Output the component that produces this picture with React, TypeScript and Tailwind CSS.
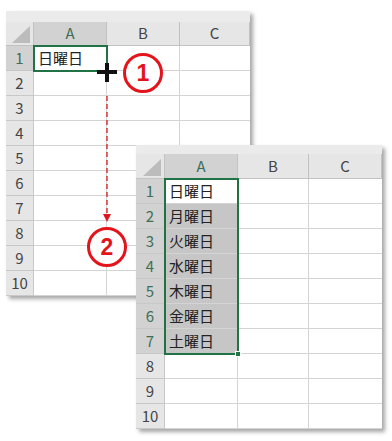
import React from "react";

const FONT = { fontFamily: '"Noto Sans CJK JP", "Noto Sans", sans-serif' };

type SheetProps = {
  className: string;
  cols: string;
  bandClass: string;
  headerClass: string;
  values: string[];
  selRows: number; // number of rows whose header is highlighted
  fillFrom: number; // first row index with gray fill
  children?: React.ReactNode;
};

function Sheet({ className, cols, bandClass, headerClass, values, selRows, fillFrom, children }: SheetProps) {
  const rows = Array.from({ length: 10 }, (_, i) => i);
  return (
    <div
      className={`absolute bg-white shadow-[3px_3px_4px_rgba(0,0,0,0.35)] ${className}`}
      style={FONT}
    >
      <div className={`${bandClass} bg-[#ebebeb]`} />
      <div className={`grid ${cols}`}>
        {/* header row */}
        <div className={`${headerClass} bg-[#e6e6e6] border-b border-r border-[#c2c2c2] flex items-end justify-end pr-[3px] pb-[2px]`}>
          <svg width="18" height="17" viewBox="0 0 18 17">
            <polygon points="18,0 18,17 0,17" fill="#bcbcbc" />
          </svg>
        </div>
        {["A", "B", "C"].map((c, ci) => (
          <div
            key={c}
            className={`${headerClass} flex items-center justify-center border-b border-r border-[#c2c2c2] text-[15px] ${
              ci === 0 ? "bg-[#d2d2d2] text-[#3e6e55]" : "bg-[#e6e6e6] text-[#444]"
            }`}
          >
            {c}
          </div>
        ))}
        {rows.map((r) => {
          const sel = r < selRows;
          const filled = r >= fillFrom && r < selRows;
          return (
            <React.Fragment key={r}>
              <div
                className={`h-[25px] flex items-center justify-center border-b border-r border-[#c8c8c8] text-[15px] ${
                  sel ? "bg-[#d2d2d2] text-[#3e6e55]" : "bg-[#e6e6e6] text-[#444]"
                }`}
              >
                {r + 1}
              </div>
              <div
                className={`h-[25px] flex items-center pl-[4px] border-b border-r border-[#d4d4d4] text-[15px] text-[#222] ${
                  filled ? "bg-[#c6c6c6]" : "bg-white"
                }`}
              >
                {values[r] ?? ""}
              </div>
              <div className="h-[25px] border-b border-r border-[#d4d4d4]" />
              <div className="h-[25px] border-b border-[#d4d4d4]" />
            </React.Fragment>
          );
        })}
      </div>
      {children}
    </div>
  );
}

export default function App() {
  return (
    <div className="relative w-[392px] h-[441px] bg-white overflow-hidden">
      <Sheet
        className="left-[6px] top-[11px] w-[244px]"
        cols="grid-cols-[28px_73px_73px_70px]"
        bandClass="h-[11px]"
        headerClass="h-[24px]"
        values={["日曜日"]}
        selRows={1}
        fillFrom={99}
      >
        <div className="absolute left-[27px] top-[34px] w-[75px] h-[27px] border-2 border-[#217346]" />
      </Sheet>

      {/* annotations on sheet 1 */}
      <svg className="absolute left-0 top-0" width="392" height="441" viewBox="0 0 392 441">
        <line x1="107" y1="96" x2="107" y2="214" stroke="#e3141b" strokeWidth="1.3" strokeDasharray="5 3" />
        <polygon points="103,214 111,214 107,222" fill="#e3141b" />
        <circle cx="143" cy="73" r="18.5" fill="white" stroke="#e3141b" strokeWidth="3" />
        <text x="143" y="81" textAnchor="middle" fontSize="23" fontWeight="700" fill="#e3141b" fontFamily="Liberation Sans, sans-serif">1</text>
        <circle cx="107" cy="247" r="18.5" fill="white" stroke="#e3141b" strokeWidth="3" />
        <text x="107" y="255" textAnchor="middle" fontSize="23" fontWeight="700" fill="#e3141b" fontFamily="Liberation Sans, sans-serif">2</text>
        <line x1="97" y1="72" x2="117" y2="72" stroke="#111" strokeWidth="4" />
        <line x1="107" y1="63" x2="107" y2="82" stroke="#111" strokeWidth="4" />
      </svg>

      <Sheet
        className="left-[136px] top-[145px] w-[246px]"
        cols="grid-cols-[29px_73px_71px_73px]"
        bandClass="h-[9px]"
        headerClass="h-[25px]"
        values={["日曜日", "月曜日", "火曜日", "水曜日", "木曜日", "金曜日", "土曜日"]}
        selRows={7}
        fillFrom={1}
      >
        <div className="absolute left-[28px] top-[33px] w-[75px] h-[177px] border-2 border-[#217346]" />
        <div className="absolute left-[99px] top-[206px] w-[6px] h-[6px] bg-[#217346] border border-white" />
      </Sheet>
    </div>
  );
}
